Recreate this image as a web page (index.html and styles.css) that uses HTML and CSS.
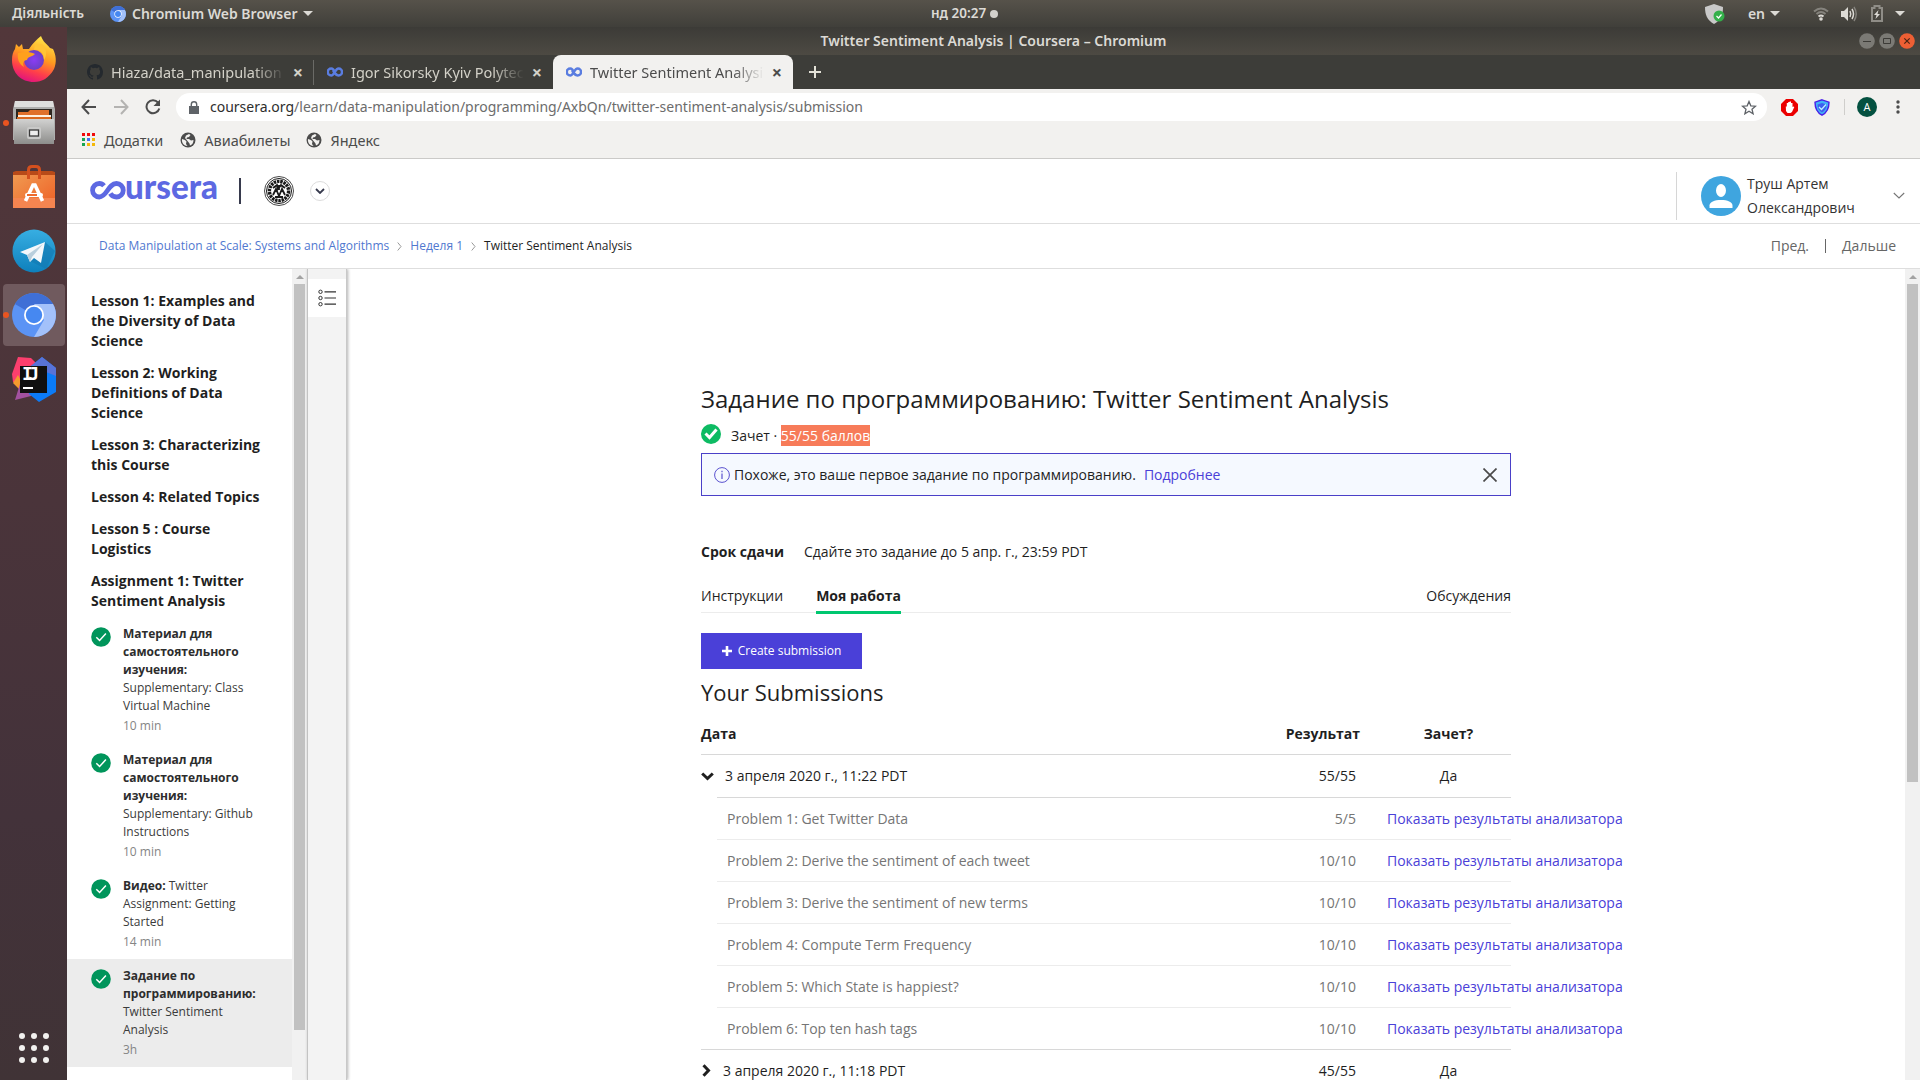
FILE: index.html
```html
<!DOCTYPE html>
<html lang="uk">
<head>
<meta charset="utf-8">
<title>Twitter Sentiment Analysis | Coursera</title>
<link rel="stylesheet" href="styles.css">
</head>
<body>
<svg class="defs" width="0" height="0">
  <defs>
    <symbol id="chromium" viewBox="0 0 44 44">
      <circle cx="22" cy="22" r="22" fill="#5b93f5"/>
      <path d="M22 22L2.9 11A22 22 0 0 1 41 11Z" fill="#3f6fd6"/>
      <path d="M22 11H41A22 22 0 0 1 22 44L32 27Z" fill="#a3c1fa"/>
      <circle cx="22" cy="22" r="10" fill="#fff"/><circle cx="22" cy="22" r="8.2" fill="#4688f1"/>
    </symbol>
    <symbol id="infinity" viewBox="0 0 16 10">
      <path d="M6.5 2.6C5.6 1.8 4.900 1.500 4.200 1.500a3.500 3.500 0 0 0 0 7C7.500 8.500 8 1.500 11.600 1.500a3.500 3.500 0 0 1 0 7C10.300 8.500 9.500 7.800 9 7M6.500 4.200C7.500 6 8.200 7 9 7.600" fill="none" stroke="#5a7de0" stroke-width="2.500" stroke-linecap="round"/>
    </symbol>
    <symbol id="globe" viewBox="0 0 16 16">
      <circle cx="8" cy="8" r="7.500" fill="#4b4b4b"/>
      <path d="M2 7l3 1 1.500 1.500L6 12l1.500 2C4 14 1.500 11 2 7zM6 3.500L9 2l1.500 1L9 5 7 5.500 6.500 7H9l2 1.500 2.500-.5C13.500 11 12 13 10 13.500l-.5-2L7.500 9 5 6z" fill="#f2f1ef"/>
    </symbol>
    <symbol id="done" viewBox="0 0 20 20">
      <circle cx="10" cy="10" r="9.800" fill="#00955b"/>
      <path d="M5.300 10.200l3.300 3.300 6.300-6.900" fill="none" stroke="#fff" stroke-width="1.500"/>
    </symbol>
  </defs>
</svg>

<header class="panel">
  <div class="panel-left">
    <span class="activities">Діяльність</span>
    <svg class="app-icon" width="16" height="16"><use href="#chromium"/></svg>
    <span class="app-name">Chromium Web Browser</span>
    <i class="caret"></i>
  </div>
  <div class="panel-clock"><span>нд 20:27</span><i class="dot"></i></div>
  <div class="panel-right">
    <svg width="20" height="22" viewBox="0 0 20 22"><path d="M9 1l9 3c0 8-2 13-9 17C2 17 0 12 0 4z" fill="#c9c9c9"/><circle cx="14" cy="13" r="5.500" fill="#33b04a"/><path d="M11.500 13l2 2 3-3.500" fill="none" stroke="#fff" stroke-width="1.200"/></svg>
    <span class="lang">en</span><i class="caret"></i>
    <svg class="wifi" width="16" height="16" viewBox="0 0 16 16" fill="none" stroke-width="2"><path d="M1 5.500Q8-.5 15 5.500M3.500 8Q8 4 12.500 8" stroke="#85837d"/><path d="M5.500 10.500Q8 8.500 10.500 10.500" stroke="#dcdad5"/><circle cx="8" cy="13" r="1.800" fill="#dcdad5"/></svg>
    <svg class="vol" width="16" height="16" viewBox="0 0 16 16"><path d="M0 5h3l4-4v14l-4-4H0z" fill="#dcdad5"/><path d="M9 5q1.500 3 0 6M11 3q3 5 0 10" fill="none" stroke="#dcdad5" stroke-width="1.500"/><path d="M13 1q4.500 7 0 14" fill="none" stroke="#85837d" stroke-width="1.400"/></svg>
    <svg class="bat" width="12" height="17" viewBox="0 0 12 17"><path d="M1 3h2.500V1h5v2H11v13H1z" fill="none" stroke="#8f8d87" stroke-width="2"/><path d="M7.500 5L3 10h2.500L4.500 14 9 9H6.500z" fill="#dcdad5"/></svg>
    <i class="caret last"></i>
  </div>
</header>

<div class="desktop">
  <nav class="dock">
    <div class="app">
      <svg width="46" height="48" viewBox="0 0 46 48">
        <defs><linearGradient id="ff" x1=".7" y1="0" x2=".35" y2="1"><stop offset="0" stop-color="#ffe94a"/><stop offset=".45" stop-color="#ff9a1f"/><stop offset=".75" stop-color="#ff3f4a"/><stop offset="1" stop-color="#e0127f"/></linearGradient><radialGradient id="fp"><stop offset="0" stop-color="#8a3cf5"/><stop offset="1" stop-color="#6b3fc4"/></radialGradient></defs>
        <path d="M4 14L5 9l3 3 3-3 1 5h6C22 8 26 4 30 1c2 6 6 8 9 12l3 1c3 6 4 13 1 20C38 43 31 47 23 47 10 47 1 38 1 25 1 20 2 17 4 14z" fill="url(#ff)"/>
        <circle cx="23" cy="25" r="10" fill="url(#fp)"/>
        <path d="M7 18c5-1 11-2 17 1-3 3-7 2-8 6-3 0-5 3-3 7-5-3-7-8-6-14z" fill="#ffa01c"/>
        <path d="M23 15c6-1 10 3 10 10 4-6 2-12-2-16l-7 1z" fill="#ffc436"/>
      </svg>
    </div>
    <div class="app running">
      <svg width="44" height="46" viewBox="0 0 44 46">
        <defs><linearGradient id="cab" x2="0" y2="1"><stop offset="0" stop-color="#d2d2d1"/><stop offset="1" stop-color="#8d8d8b"/></linearGradient></defs>
        <path d="M3 1h38l2 8v31H1V9z" fill="#aeaead"/><path d="M3 1h38l1 6H2z" fill="#dededd"/>
        <path d="M4 9h36v11H4z" fill="#2c2620"/><path d="M6 12h10l2-2h19v8H6z" fill="#e0702a"/><path d="M6 15h33v2H6z" fill="#fff0e0"/><path d="M5 17h34v3H5z" fill="#d8681f"/>
        <path d="M2 19h40v25H2z" fill="url(#cab)"/>
        <rect x="15" y="27" width="14" height="12" rx="2" fill="#c9c9c8"/><rect x="17.500" y="30" width="9" height="6" fill="#eee" stroke="#3a3a3a" stroke-width="1.300"/>
      </svg>
    </div>
    <div class="app">
      <svg width="42" height="44" viewBox="0 0 42 44">
        <defs><linearGradient id="bag" x2="1" y2="1"><stop offset="0" stop-color="#f09a51"/><stop offset="1" stop-color="#ee5f25"/></linearGradient></defs>
        <path d="M0 7l3-1h36l3 1v5H0z" fill="#b84a18"/><path d="M0 10h42v33H0z" fill="url(#bag)"/><path d="M0 33h42v10H0z" fill="#f58550"/>
        <path d="M15.500 14V5q0-3.500 3.500-3.500h4q3.500 0 3.500 3.500v9" fill="none" stroke="#d4501e" stroke-width="3"/>
        <path d="M12.500 36L20 20h2l7.500 16" fill="none" stroke="#fff" stroke-width="3.600"/><rect x="12" y="28" width="18" height="4" rx="2" fill="#fff"/><path d="M14 29h10v2H14z" fill="#ee6a2c"/>
      </svg>
    </div>
    <div class="app">
      <svg width="44" height="44" viewBox="0 0 44 44">
        <defs><linearGradient id="tg" x2="0" y2="1"><stop offset="0" stop-color="#37aee2"/><stop offset="1" stop-color="#0e80bc"/></linearGradient></defs>
        <circle cx="22" cy="22" r="21.500" fill="url(#tg)"/><path d="M33 13l10 9-9 18-16-8z" fill="#1278b0" opacity=".6"/>
        <path d="M8 23l25-10-4 21-7-5-4 4-3-7z" fill="#f4f8fb"/><path d="M15 26l16-11-11 13-2 5z" fill="#b9cfdd"/>
      </svg>
    </div>
    <div class="app running active"><svg width="44" height="44"><use href="#chromium"/></svg></div>
    <div class="app">
      <svg width="46" height="46" viewBox="0 0 46 46">
        <path d="M7 1l13 1 8 8-3 16H2L1 18z" fill="#fc3f6e"/><path d="M2 27l5-8 5 10-3 5z" fill="#f59a2e"/><path d="M9 28h16l-5 12-16 4z" fill="#a2519f"/>
        <path d="M20 10L31 1l14 11v24L28 46 18 38z" fill="#0c7bf7"/><path d="M20 10L31 1l14 11v8z" fill="#5873d8"/>
        <path d="M9 10h27v27H9z" fill="#101010"/><text class="ij" x="11" y="24" textLength="17">IJ</text><path d="M12 31h10v2H12z" fill="#fff"/>
      </svg>
    </div>
    <div class="grid-btn">
      <svg width="32" height="32" viewBox="0 0 32 32" fill="#f2f1ef"><circle cx="4" cy="4" r="3"/><circle cx="16" cy="4" r="3"/><circle cx="28" cy="4" r="3"/><circle cx="4" cy="16" r="3"/><circle cx="16" cy="16" r="3"/><circle cx="28" cy="16" r="3"/><circle cx="4" cy="28" r="3"/><circle cx="16" cy="28" r="3"/><circle cx="28" cy="28" r="3"/></svg>
    </div>
  </nav>

  <div class="window">
    <div class="titlebar">
      <span class="window-title">Twitter Sentiment Analysis | Coursera – Chromium</span>
      <div class="window-buttons">
        <svg width="16" height="16" viewBox="0 0 16 16"><circle cx="8" cy="8" r="7.800" fill="#7b7a75"/><path d="M4 8.500h8" stroke="#3c3b37"/></svg>
        <svg width="16" height="16" viewBox="0 0 16 16"><circle cx="8" cy="8" r="7.800" fill="#7b7a75"/><path d="M4.500 5.500h7v5h-7z" fill="none" stroke="#3c3b37"/></svg>
        <svg width="16" height="16" viewBox="0 0 16 16"><circle cx="8" cy="8" r="7.800" fill="#ee5f34"/><path d="M5.300 5.300l5.400 5.400M10.700 5.300l-5.400 5.400" stroke="#4b2414" stroke-width="1.200"/></svg>
      </div>
    </div>
    <div class="tabs">
      <div class="tab tab-first">
        <svg width="16" height="16" viewBox="0 0 16 16"><path fill="#24292e" d="M8 0C3.580 0 0 3.580 0 8c0 3.540 2.290 6.530 5.470 7.590.4.070.55-.17.55-.38 0-.19-.01-.82-.01-1.490-2.010.37-2.530-.49-2.690-.94-.09-.23-.48-.94-.82-1.130-.28-.15-.68-.52-.01-.53.63-.01 1.080.58 1.230.82.72 1.210 1.870.87 2.330.66.07-.52.28-.87.51-1.070-1.780-.2-3.640-.89-3.640-3.950 0-.87.31-1.590.82-2.150-.08-.2-.36-1.020.08-2.120 0 0 .67-.21 2.200.82a7.600 7.600 0 0 1 4 0c1.530-1.040 2.200-.82 2.200-.82.44 1.100.16 1.920.08 2.120.51.56.82 1.270.82 2.150 0 3.070-1.870 3.750-3.650 3.950.29.25.54.73.54 1.480 0 1.070-.01 1.930-.01 2.200 0 .21.15.46.55.38A8 8 0 0 0 16 8c0-4.420-3.580-8-8-8z"/></svg>
        <span class="tab-title">Hiaza/data_manipulation</span><b class="tab-x">×</b>
      </div>
      <div class="tab">
        <svg width="16" height="10"><use href="#infinity"/></svg>
        <span class="tab-title t2">Igor Sikorsky Kyiv Polytechnic</span><b class="tab-x">×</b>
      </div>
      <div class="tab selected">
        <svg width="16" height="10"><use href="#infinity"/></svg>
        <span class="tab-title t3">Twitter Sentiment Analysis</span><b class="tab-x">×</b>
      </div>
      <svg class="new-tab" width="12" height="12" viewBox="0 0 12 12"><path d="M6 0v12M0 6h12" stroke="#e4e2d8" stroke-width="2"/></svg>
    </div>
    <div class="toolbar">
      <svg width="16" height="16" viewBox="0 0 16 16" fill="none" stroke="#4c4c4c" stroke-width="2"><path d="M15 8H2M8 1L1.500 8 8 15"/></svg>
      <svg width="16" height="16" viewBox="0 0 16 16" fill="none" stroke="#b4b3b1" stroke-width="2"><path d="M1 8h13M8 1l6.500 7L8 15"/></svg>
      <svg width="16" height="16" viewBox="0 0 16 16"><path d="M13 3.500A6.500 6.500 0 1 0 14.300 9.500" fill="none" stroke="#4c4c4c" stroke-width="2"/><path d="M15 .5V7H8.500z" fill="#4c4c4c"/></svg>
      <div class="omnibox">
        <svg width="10" height="13" viewBox="0 0 10 13"><path d="M0 5h10v8H0z" fill="#5f6368"/><path d="M2.300 5V3.500a2.700 2.700 0 0 1 5.400 0V5" fill="none" stroke="#5f6368" stroke-width="1.400"/></svg>
        <span class="url"><b>coursera.org</b>/learn/data-manipulation/programming/AxbQn/twitter-sentiment-analysis/submission</span>
        <svg width="16" height="15" viewBox="0 0 16 15"><path d="M8 1.500l1.800 4.300 4.700.4-3.500 3 1.100 4.600L8 11.300l-4.100 2.500L5 9.200l-3.500-3 4.700-.4z" fill="none" stroke="#5f6368" stroke-width="1.300"/></svg>
      </div>
      <svg class="ext" width="17" height="17" viewBox="0 0 17 17"><path d="M5 0h7l5 5v7l-5 5H5l-5-5V5z" fill="#eb0000"/><path d="M4.800 7.500h1V4h1.400V3h1.400v-.5H10V4h1.500v4l1-.5.8.6L11 13l-1.500 1h-3L5 12z" fill="#fff"/></svg>
      <svg class="ext2" width="16" height="17" viewBox="0 0 16 17"><path d="M8 .8l7 2.400c0 6-1.500 10-7 13C2.500 13.200 1 9.200 1 3.200z" fill="#42b4f5" stroke="#4a1ee8" stroke-width="1.400"/><path d="M8 4l4.500 1.500c0 4-1.500 6-4.500 8-3-2-4.500-4-4.500-8z" fill="#3d5ff0"/><path d="M5 8l2.500 2.500L12 5.500" fill="none" stroke="#bdf0ff" stroke-width="1.300"/></svg>
      <i class="tool-sep"></i>
      <span class="profile">A</span>
      <svg class="menu" width="4" height="14" viewBox="0 0 4 14" fill="#4c4c4c"><circle cx="2" cy="2" r="1.700"/><circle cx="2" cy="7" r="1.700"/><circle cx="2" cy="12" r="1.700"/></svg>
    </div>
    <div class="bookmarks">
      <svg width="13" height="13" viewBox="0 0 13 13"><path d="M0 0h3v3H0zM5 0h3v3H5zM10 0h3v3h-3z" fill="#f00b0b"/><path d="M0 5h3v3H0zM0 10h3v3H0z" fill="#18a552"/><path d="M5 5h3v3H5z" fill="#4471f0"/><path d="M10 5h3v3h-3zM5 10h3v3H5zM10 10h3v3h-3z" fill="#f4b80a"/></svg>
      <span class="bm1">Додатки</span>
      <svg width="16" height="16"><use href="#globe"/></svg><span class="bm2">Авиабилеты</span>
      <svg width="16" height="16"><use href="#globe"/></svg><span class="bm3">Яндекс</span>
    </div>

    <div class="site-header">
      <svg class="logo" width="128" height="26" viewBox="0 0 128 26" role="img" aria-label="coursera">
        <path d="M14 7.800C12.500 6 10.800 5.500 9.300 5.500A6.600 6.600 0 0 0 9.300 19C17 19 18 5.500 26.500 5.500A6.600 6.600 0 0 1 26.500 19C23.500 19 21.500 17.500 20.300 15.500" fill="none" stroke="#5d68e2" stroke-width="4.800"/>
        <text class="logo-text" x="35" y="21" textLength="93" lengthAdjust="spacingAndGlyphs">ursera</text>
      </svg>
      <i class="logo-sep"></i>
      <svg class="seal" width="30" height="30" viewBox="0 0 30 30" fill="none" stroke="#1a1a1a"><circle cx="15" cy="15" r="14.500" stroke-width=".8"/><circle cx="15" cy="15" r="12.500" stroke-width="1"/><circle cx="15" cy="15" r="9.600" stroke-width="3.400" stroke-dasharray="2.500 .8"/><path d="M9 12l4-3 1 4 3-4 4 3M9 19l3-6 3 7 3-7 3 6M11 21h8M15 9v5" stroke-width="1.800"/></svg>
      <span class="round-btn"><svg width="10" height="6" viewBox="0 0 10 6"><path d="M1 1l4 4 4-4" fill="none" stroke="#373a4d" stroke-width="1.800"/></svg></span>
      <div class="user">
        <svg width="40" height="40" viewBox="0 0 40 40"><circle cx="20" cy="20" r="20" fill="#3fa5df"/><ellipse cx="20" cy="14.500" rx="5" ry="6.500" fill="#fff"/><path d="M8.500 32v-2.500c0-3.500 5-5.500 11.500-5.500s11.500 2 11.500 5.500V32z" fill="#fff"/></svg>
        <span class="user-name">Труш Артем Олександрович</span>
        <svg class="user-arrow" width="12" height="7" viewBox="0 0 12 7"><path d="M.8 1L6 6l5.200-5" fill="none" stroke="#757575" stroke-width="1.100"/></svg>
      </div>
    </div>
    <div class="crumbs">
      <a>Data Manipulation at Scale: Systems and Algorithms</a>
      <svg width="5" height="9" viewBox="0 0 5 9"><path d="M.7.5L4 4.500.7 8.500" fill="none" stroke="#999"/></svg>
      <a>Неделя 1</a>
      <svg width="5" height="9" viewBox="0 0 5 9"><path d="M.7.5L4 4.500.7 8.500" fill="none" stroke="#999"/></svg>
      <span>Twitter Sentiment Analysis</span>
      <div class="pager"><span>Пред.</span><i></i><span>Дальше</span></div>
    </div>

    <div class="body">
      <aside class="sidebar">
        <h4>Lesson 1: Examples and the Diversity of Data Science</h4>
        <h4>Lesson 2: Working Definitions of Data Science</h4>
        <h4>Lesson 3: Characterizing this Course</h4>
        <h4>Lesson 4: Related Topics</h4>
        <h4>Lesson 5 : Course Logistics</h4>
        <h4>Assignment 1: Twitter Sentiment Analysis</h4>
        <ul>
          <li><svg width="20" height="20"><use href="#done"/></svg><div><p><b>Материал для самостоятельного изучения:</b> Supplementary: Class Virtual Machine</p><small>10 min</small></div></li>
          <li><svg width="20" height="20"><use href="#done"/></svg><div><p><b>Материал для самостоятельного изучения:</b> Supplementary: Github Instructions</p><small>10 min</small></div></li>
          <li><svg width="20" height="20"><use href="#done"/></svg><div><p><b>Видео:</b> Twitter Assignment: Getting Started</p><small>14 min</small></div></li>
          <li class="current"><svg width="20" height="20"><use href="#done"/></svg><div><p><b>Задание по программированию:</b> Twitter Sentiment Analysis</p><small>3h</small></div></li>
        </ul>
      </aside>
      <div class="scroll side-scroll"><i class="up"></i><i class="thumb"></i></div>
      <div class="rail">
        <span class="rail-btn"><svg width="18" height="18" viewBox="0 0 18 18" fill="none" stroke="#333"><circle cx="2.500" cy="2.800" r="1.700"/><circle cx="2.500" cy="9" r="1.700"/><circle cx="2.500" cy="15.200" r="1.700"/><path d="M6.500 2.800H18M6.500 9H18M6.500 15.200H18" stroke-width="1.200"/></svg></span>
      </div>
      <main>
        <div class="content">
          <h1>Задание по программированию: Twitter Sentiment Analysis</h1>
          <div class="grade">
            <svg width="20" height="20" viewBox="0 0 20 20"><circle cx="10" cy="10" r="10" fill="#0dbb63"/><path d="M4.500 9.500l4 4 7-8" fill="none" stroke="#fff" stroke-width="3"/></svg>
            <span>Зачет · <mark>55/55 баллов</mark></span>
          </div>
          <div class="notice">
            <svg width="16" height="16" viewBox="0 0 16 16"><circle cx="8" cy="8" r="7.400" fill="none" stroke="#5a52cf"/><path d="M8 6.500V12M8 3.800v1.400" stroke="#5a52cf" stroke-width="1.200"/></svg>
            <span>Похоже, это ваше первое задание по программированию.</span><a>Подробнее</a>
            <svg class="close" width="14" height="14" viewBox="0 0 14 14"><path d="M.5.5l13 13M13.500.5l-13 13" stroke="#4a4a4a" stroke-width="1.700"/></svg>
          </div>
          <div class="deadline"><b>Срок сдачи</b><span>Сдайте это задание до 5 апр. г., 23:59 PDT</span></div>
          <div class="work-tabs"><span>Инструкции</span><span class="on">Моя работа</span><span class="right">Обсуждения</span></div>
          <button class="create"><svg width="10" height="10" viewBox="0 0 10 10"><path d="M5 0v10M0 5h10" stroke="#fff" stroke-width="2.600"/></svg>Create submission</button>
          <h2>Your Submissions</h2>
          <div class="row head"><span>Дата</span><span class="score">Результат</span><span class="pass">Зачет?</span></div>
          <div class="row"><span class="date open"><svg width="13" height="9" viewBox="0 0 13 9"><path d="M1.200 1.500l5.300 5 5.300-5" fill="none" stroke="#1f1f1f" stroke-width="3"/></svg>3 апреля 2020 г., 11:22 PDT</span><span class="score">55/55</span><span class="pass">Да</span></div>
          <div class="problems">
            <div class="row"><span>Problem 1: Get Twitter Data</span><span class="score">5/5</span><a>Показать результаты анализатора</a></div>
            <div class="row"><span>Problem 2: Derive the sentiment of each tweet</span><span class="score">10/10</span><a>Показать результаты анализатора</a></div>
            <div class="row"><span>Problem 3: Derive the sentiment of new terms</span><span class="score">10/10</span><a>Показать результаты анализатора</a></div>
            <div class="row"><span>Problem 4: Compute Term Frequency</span><span class="score">10/10</span><a>Показать результаты анализатора</a></div>
            <div class="row"><span>Problem 5: Which State is happiest?</span><span class="score">10/10</span><a>Показать результаты анализатора</a></div>
            <div class="row"><span>Problem 6: Top ten hash tags</span><span class="score">10/10</span><a>Показать результаты анализатора</a></div>
          </div>
          <div class="row later"><span class="date"><svg width="9" height="13" viewBox="0 0 9 13"><path d="M1.500 1.200l5 5.300-5 5.300" fill="none" stroke="#1f1f1f" stroke-width="3"/></svg>3 апреля 2020 г., 11:18 PDT</span><span class="score">45/55</span><span class="pass">Да</span></div>
        </div>
      </main>
      <div class="scroll main-scroll"><i class="up"></i><i class="thumb"></i></div>
    </div>
  </div>
</div>
</body>
</html>
```
FILE: styles.css
```css
* { box-sizing: border-box; }
body {
  margin: 0; width: 1920px; height: 1080px; overflow: hidden;
  display: flex; flex-direction: column;
  font: 14px/20px "Open Sans", "Noto Sans", sans-serif; color: #1f1f1f; background: #fff;
}
.defs { position: absolute; }
svg { flex: none; display: block; }
h1, h2, h4, p, ul { margin: 0; padding: 0; }
a { color: #4a40d8; }

/* desktop panel */
.panel {
  height: 27px; flex: none; display: grid; grid-template-columns: 1fr auto 1fr; align-items: center;
  background: linear-gradient(#56524a, #403f3a); color: #dcdad5;
  font: 600 14px/27px "Noto Sans", sans-serif;
}
.panel-left { display: flex; align-items: center; padding-left: 12px; }
.activities { width: 98px; font-size: 13.500px; }
.app-name { margin-left: 6px; font-size: 14px; }
.caret { border: 5px solid transparent; border-top-color: #dcdad5; border-bottom: 0; margin-left: 5px; }
.panel-clock { display: flex; align-items: center; gap: 4px; font-size: 13.500px; padding-left: 9px; }
.dot { width: 8px; height: 8px; border-radius: 50%; background: #d3d1cc; }
.panel-right { display: flex; align-items: center; justify-content: flex-end; padding-right: 15px; }
.lang { margin-left: 23px; font-size: 14px; }
.wifi { margin-left: 33px; }
.vol { margin-left: 12px; }
.bat { margin-left: 14px; }
.caret.last { margin-left: 12px; }

.desktop { flex: 1; display: flex; min-height: 0; }
.dock {
  width: 67px; flex: none; display: flex; flex-direction: column; align-items: center; padding-top: 1px; gap: 2px;
  background: linear-gradient(#52373a, #4a343a 45%, #43323a 75%, #403336);
}
.app { position: relative; width: 62px; height: 62px; border-radius: 4px; display: grid; place-items: center; }
.app.active { background: #705a5e; }
.app.running::before { content: ""; position: absolute; left: 0; top: 28px; width: 6px; height: 6px; border-radius: 50%; background: #e95420; }
.ij { font: 700 18px "DejaVu Sans Mono", monospace; fill: #fff; }
.grid-btn { margin-top: auto; padding-bottom: 16px; }

.window { flex: 1; min-width: 0; display: flex; flex-direction: column; }
.titlebar {
  height: 28px; flex: none; display: grid; grid-template-columns: 1fr auto 1fr; align-items: center;
  background: linear-gradient(#3c3b37, #4d4a43); color: #dcdad5;
  font: 600 14px/28px "Noto Sans", sans-serif;
}
.window-title { grid-column: 2; }
.window-buttons { display: flex; gap: 4px; justify-content: flex-end; padding-right: 5px; }

.tabs { height: 34px; flex: none; background: #3d3d39; display: flex; align-items: center; }
.tab { height: 34px; width: 239px; display: flex; align-items: center; color: #d3d1c8; padding: 0 11px 0 13px; border-left: 0; font: 14.500px/34px "Noto Sans", sans-serif; }
.tab-first { width: 247px; padding-left: 20px; background: linear-gradient(#6a6a66, #6a6a66) right center / 1px 25px no-repeat; }
.tab-title { flex: 1; margin: 0 8px; white-space: nowrap; overflow: hidden; -webkit-mask: linear-gradient(90deg, #000 82%, transparent); mask: linear-gradient(90deg, #000 82%, transparent); }
.tab-x { font: 700 18px/30px "Noto Sans", sans-serif; }
.tab.selected { width: 240px; background: #f2f1ef; color: #4c4c4c; border-radius: 8px 8px 0 0; }
.new-tab { margin-left: 16px; }

.toolbar { height: 36px; flex: none; background: #f2f1ef; display: flex; align-items: center; padding: 0 20px 0 14px; gap: 16px; }
.omnibox { flex: 1; height: 28px; border-radius: 14px; background: #fff; display: flex; align-items: center; padding: 0 10px 0 13px; margin-left: -1px; }
.url { flex: 1; margin-left: 11px; color: #6c6c6c; font: 14px/28px "Noto Sans", sans-serif; white-space: nowrap; }
.url b { font-weight: 400; color: #2e2e2e; }
.ext { margin-left: -2px; }
.tool-sep { width: 1px; height: 16px; background: #cfcecb; margin-left: -2px; }
.profile { width: 20px; height: 20px; border-radius: 50%; background: #045140; color: #fff; text-align: center; font-size: 11px; margin-left: -4px; }
.menu { margin-left: 3px; }
.bookmarks { height: 34px; flex: none; background: #f2f1ef; border-bottom: 1px solid #cbcac8; display: flex; align-items: center; padding: 0 0 4px 15px; color: #4c4c4c; font: 14.500px/30px "Noto Sans", sans-serif; }
.bm1 { margin: 0 17px 0 9px; }
.bm2 { margin: 0 16px 0 8px; }
.bm3 { margin-left: 8px; }

/* course page */
.site-header { height: 65px; flex: none; border-bottom: 1px solid #dedede; display: flex; align-items: center; padding-left: 23px; }
.logo-text { font: 900 35px Lato, sans-serif; fill: #5d68e2; }
.logo-sep { width: 2px; height: 26px; background: #373a4d; margin-left: 21px; }
.seal { margin-left: 23px; }
.round-btn { width: 20px; height: 20px; border: 1px solid #dcdcdc; border-radius: 50%; display: grid; place-items: center; margin-left: 16px; }
.user { margin-left: auto; width: 244px; height: 48px; border-left: 1px solid #d6d6d6; display: flex; align-items: center; padding: 0 15px 0 24px; margin-top: 9px; }
.user-name { width: 130px; margin-left: 6px; line-height: 24px; color: #333; }
.user-arrow { margin-left: auto; }
.crumbs { height: 45px; flex: none; border-bottom: 1px solid #dedede; display: flex; align-items: center; padding: 0 24px 0 32px; font-size: 12px; gap: 8px; }
.crumbs a { color: #5078cf; }
.pager { margin-left: auto; display: flex; align-items: center; gap: 16px; font-size: 14px; color: #666; }
.pager i { width: 1px; height: 14px; background: #666; }

.body { flex: 1; display: flex; min-height: 0; overflow: hidden; }
.sidebar { width: 225px; flex: none; padding-top: 22px; }
.sidebar h4 { font: 700 14px/20px "Open Sans", sans-serif; margin: 0 24px 12px; width: 180px; }
.sidebar ul { list-style: none; margin-top: -6px; }
.sidebar li { display: flex; padding: 8px 24px; gap: 12px; font-size: 12px; line-height: 18px; color: #3b3b3b; }
.sidebar li svg { margin-top: 2px; }
.sidebar li div { width: 136px; }
.sidebar small { display: block; font-size: 12px; margin-top: 2px; color: #858585; }
.sidebar li b { color: #2d2d2d; }
.sidebar li.current { background: #ececec; }

.scroll { width: 15px; flex: none; background: #f1f1f1; display: flex; flex-direction: column; align-items: center; }
.up { border: 4px solid transparent; border-top: 0; border-bottom-color: #a3a3a3; margin: 6px 0 5px; }
.thumb { width: 11px; background: #c1c1c1; }
.side-scroll .thumb { height: 746px; }
.main-scroll .thumb { height: 498px; }
.rail { width: 40px; flex: none; background: #f3f3f3; border-left: 1px solid #c3c3c3; border-right: 1px solid #c8c8c8; padding-top: 10px; box-shadow: 1px 0 3px rgba(0,0,0,.3); }
.rail-btn { height: 38px; background: #fff; display: grid; place-items: center; }

main { flex: 1; min-width: 0; padding-left: 354px; }
.content { width: 810px; padding-top: 112px; }
h1 { font-size: 24px; line-height: 36px; font-weight: 400; white-space: nowrap; }
.grade { display: flex; align-items: center; gap: 10px; height: 22px; margin-top: 7px; }
.grade svg { margin-top: -2px; }
mark { background: #f77b59; color: #fff; display: inline-block; height: 21px; line-height: 22px; }
.notice { height: 43px; margin-top: 7px; border: 1px solid #4a40c8; background: #f5f9ff; display: flex; align-items: center; padding: 0 13px 0 12px; }
.notice span { margin: 0 8px 0 4px; }
.close { margin-left: auto; }
.deadline { display: flex; gap: 20px; margin-top: 46px; }
.work-tabs { display: flex; height: 27px; margin-top: 24px; border-bottom: 1px solid #ececec; }
.work-tabs .on { margin-left: 33px; height: 28px; font-weight: 700; border-bottom: 3px solid #00c770; }
.work-tabs .right { margin-left: auto; }
.create { display: flex; align-items: center; justify-content: center; gap: 6px; margin-top: 20px; width: 161px; height: 36px; border: 0; padding: 0; background: #4a40d8; color: #fff; font: 12px/18px "Open Sans", sans-serif; }
h2 { font-size: 22px; line-height: 30px; font-weight: 400; margin-top: 8px; }
.row { height: 42px; display: flex; align-items: center; border-bottom: 1px solid #d8d8d8; white-space: nowrap; }
.head { height: 41px; font-weight: 700; margin-top: 7px; }
.head + .row { border-bottom: 0; }
.row > :first-child { flex: 1; }
.row .score { width: 80px; text-align: right; margin-right: 31px; }
.head .score { width: 84px; margin-right: 27px; }
.row .pass { width: 124px; text-align: center; padding-right: 1px; }
.head + .row .pass, .later .pass { width: 124px; }
.date { display: flex; align-items: center; gap: 12px; }
.date svg { margin-left: 1px; }
.open { gap: 11px; }
.open svg { margin-left: 0; }
.problems { border-top: 1px solid #d8d8d8; margin-left: 16px; color: #757575; }
.problems .row { padding-left: 10px; border-bottom-color: #ececec; }
.problems .row:last-child { border-bottom: 0; height: 41px; }
.problems a { width: 124px; }
.later { border-top: 1px solid #d8d8d8; border-bottom: 0; }
```
